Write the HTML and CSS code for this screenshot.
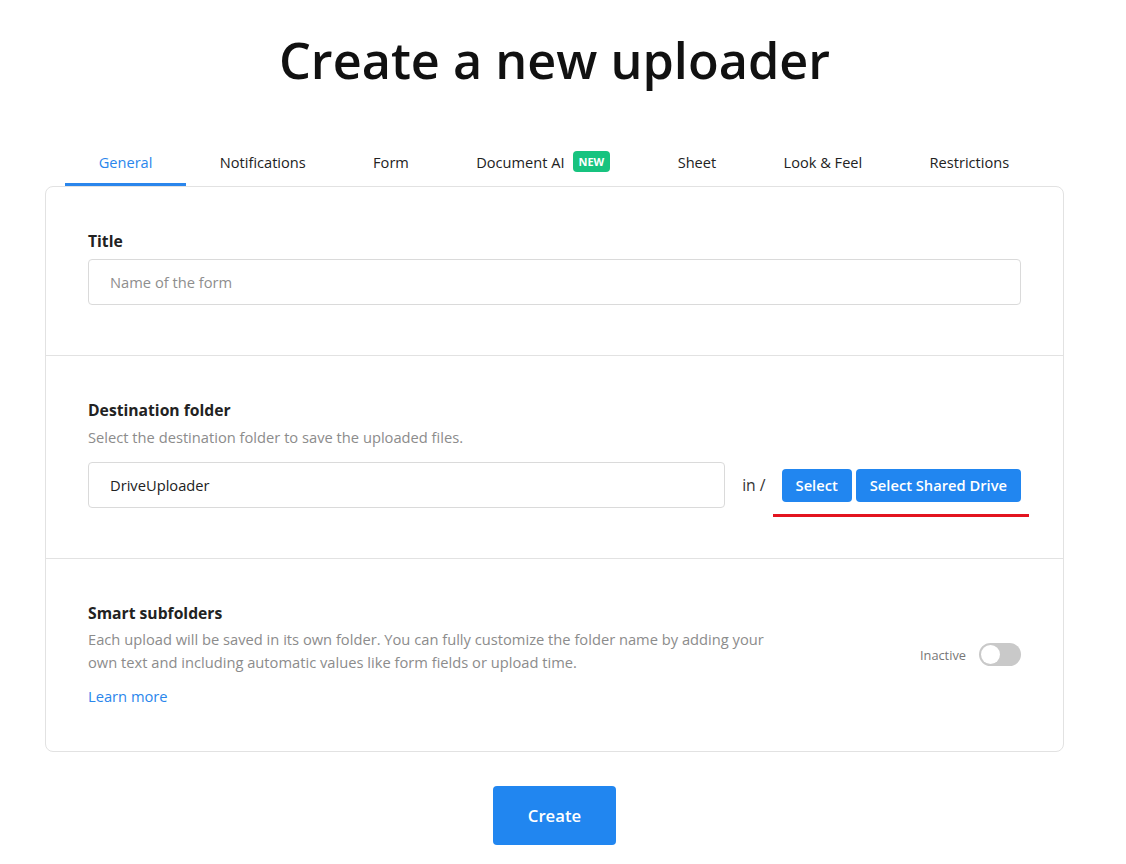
FILE: index.html
```html
<!DOCTYPE html>
<html lang="en">
<head>
<meta charset="utf-8">
<title>Create a new uploader</title>
<link rel="stylesheet" href="styles.css">
</head>
<body>
<div class="page">
  <h1 class="page-title">Create a new uploader</h1>

  <nav class="tabs">
    <a class="tab active">General</a>
    <a class="tab">Notifications</a>
    <a class="tab">Form</a>
    <a class="tab">Document AI <span class="badge">NEW</span></a>
    <a class="tab">Sheet</a>
    <a class="tab">Look &amp; Feel</a>
    <a class="tab">Restrictions</a>
  </nav>

  <div class="card">
    <section class="section section-title">
      <label class="label">Title</label>
      <input class="input" type="text" placeholder="Name of the form">
    </section>

    <section class="section section-dest">
      <label class="label">Destination folder</label>
      <p class="desc">Select the destination folder to save the uploaded files.</p>
      <div class="folder-row">
        <input class="input folder-input" type="text" value="DriveUploader">
        <span class="in-sep">in /</span>
        <div class="btn-group">
          <button class="btn">Select</button>
          <button class="btn">Select Shared Drive</button>
          <span class="mark"></span>
        </div>
      </div>
    </section>

    <section class="section section-smart">
      <div class="smart-text">
        <label class="label">Smart subfolders</label>
        <p class="desc smart-desc">Each upload will be saved in its own folder. You can fully customize the folder name by adding your own text and including automatic values like form fields or upload time.</p>
        <a class="link">Learn more</a>
      </div>
      <div class="toggle-wrap">
        <span class="toggle-label">Inactive</span>
        <span class="toggle"><span class="knob"></span></span>
      </div>
    </section>
  </div>

  <div class="actions">
    <button class="btn-create">Create</button>
  </div>
</div>
</body>
</html>
```

FILE: styles.css
```css
* {
  box-sizing: border-box;
}

html, body {
  margin: 0;
  padding: 0;
  background: #fff;
}

body {
  font-family: "Open Sans", "Noto Sans", sans-serif;
  color: #222;
  padding-right: 17px;
}

.page {
  width: 1019px;
  margin: 0 auto;
}

.page-title {
  margin: 0;
  padding-top: 26px;
  height: 140px;
  text-align: center;
  font-size: 50.4px;
  font-weight: 600;
  line-height: 68px;
  color: #111;
}

/* tab strip */
.tabs {
  display: flex;
  padding-left: 20px;
  height: 46px;
}

.tab {
  display: flex;
  align-items: center;
  padding: 3px 33.7px 3px;
  font-size: 14.6px;
  color: #222;
  cursor: pointer;
  border-bottom: 3px solid transparent;
  white-space: nowrap;
}

.tab.active {
  color: #2a86ec;
  border-bottom-color: #2a86ec;
}

.badge {
  display: inline-block;
  margin-left: 8px;
  padding: 0 6px;
  height: 21px;
  line-height: 21px;
  border-radius: 4px;
  background: #17c37f;
  color: #fff;
  font-size: 11px;
  font-weight: 700;
}

/* card */
.card {
  border: 1px solid #e2e2e2;
  border-radius: 8px;
}

.section {
  padding: 43px 42px 50px 42px;
}

.section + .section {
  border-top: 1px solid #e2e2e2;
}

.label {
  display: block;
  font-size: 15.7px;
  font-weight: 700;
  line-height: 22px;
  color: #222;
}

.desc {
  margin: 5px 0 0;
  font-size: 14.7px;
  line-height: 22px;
  color: #8c8c8c;
}

.input {
  display: block;
  width: 100%;
  height: 46px;
  margin-top: 7px;
  padding: 0 21px;
  border: 1px solid #dadada;
  border-radius: 4px;
  font-family: inherit;
  font-size: 14.7px;
  color: #222;
  outline: none;
}

.input::placeholder {
  color: #8e8e8e;
}

.folder-row {
  display: flex;
  align-items: center;
  margin-top: 14px;
}

.folder-input {
  flex: 1 1 auto;
  width: auto;
  min-width: 0;
  margin-top: 0;
}

.in-sep {
  flex: none;
  margin: 0 16px 0 17px;
  font-size: 15.7px;
  color: #333;
  white-space: nowrap;
}

.btn-group {
  flex: none;
  position: relative;
  display: flex;
  gap: 4px;
}

.btn {
  height: 33px;
  padding: 0 14px;
  border: none;
  border-radius: 4px;
  background: #2186f0;
  color: #fff;
  font-family: inherit;
  font-size: 14.7px;
  font-weight: 600;
  white-space: nowrap;
  cursor: pointer;
}

/* red underline beneath the folder picker buttons */
.mark {
  position: absolute;
  left: -9px;
  right: -8px;
  bottom: -15px;
  height: 3px;
  background: #e3141f;
}

.section-smart {
  display: flex;
  align-items: center;
  justify-content: space-between;
  padding-bottom: 44px;
}

.smart-text {
  width: 690px;
}

.smart-desc {
  line-height: 23px;
  margin-top: 4px;
}

.link {
  display: inline-block;
  margin-top: 11px;
  font-size: 14.7px;
  line-height: 22px;
  color: #2a86ec;
  cursor: pointer;
}

.toggle-wrap {
  display: flex;
  align-items: center;
  gap: 13px;
}

.toggle-label {
  font-size: 12.8px;
  color: #777;
}

.toggle {
  position: relative;
  width: 42px;
  height: 23px;
  border-radius: 12px;
  background: #c9c9c9;
}

.knob {
  position: absolute;
  top: 2px;
  left: 2px;
  width: 19px;
  height: 19px;
  border-radius: 50%;
  background: #fff;
}

.actions {
  display: flex;
  justify-content: center;
  margin-top: 34px;
}

.btn-create {
  width: 123px;
  height: 59px;
  border: none;
  border-radius: 4px;
  background: #2186f0;
  color: #fff;
  font-family: inherit;
  font-size: 16.7px;
  font-weight: 600;
  cursor: pointer;
}
```
